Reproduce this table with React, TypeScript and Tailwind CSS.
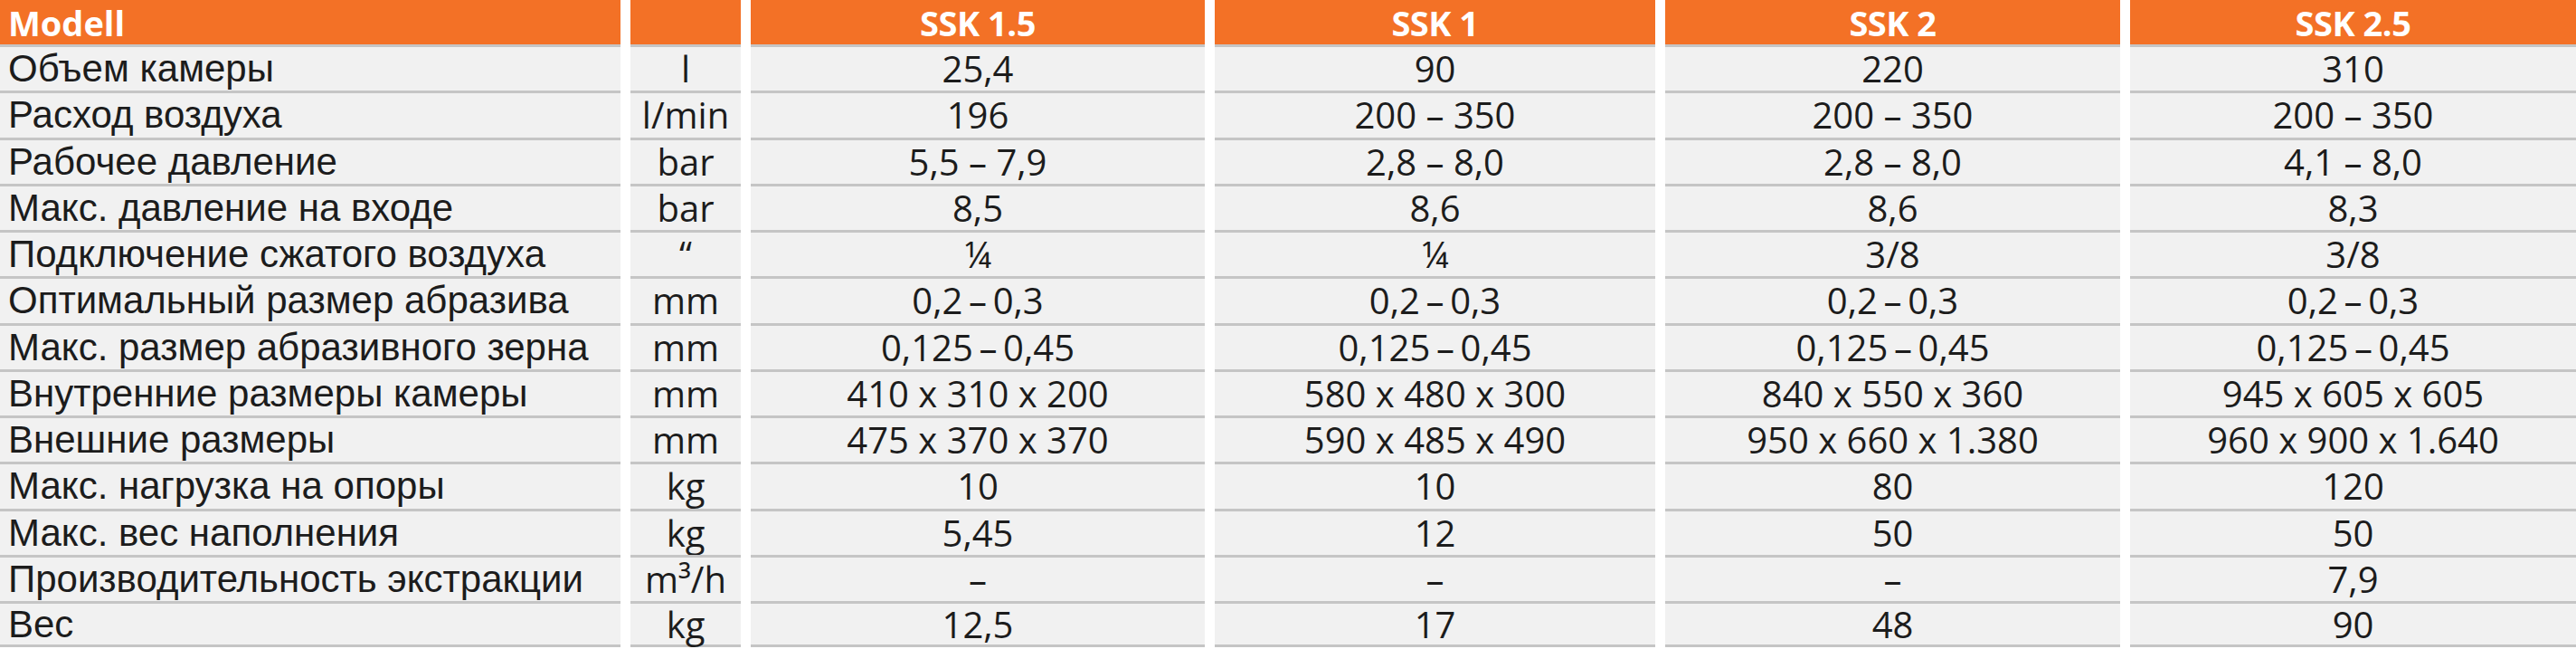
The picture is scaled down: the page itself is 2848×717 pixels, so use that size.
import React from "react"

const models = ["SSK 1.5", "SSK 1", "SSK 2", "SSK 2.5"]

const thin = "\u2009"

const rows: { label: string; unit: string; values: string[] }[] = [
  { label: "Объем камеры", unit: "l", values: ["25,4", "90", "220", "310"] },
  { label: "Расход воздуха", unit: "l/min", values: ["196", "200 – 350", "200 – 350", "200 – 350"] },
  { label: "Рабочее давление", unit: "bar", values: ["5,5 – 7,9", "2,8 – 8,0", "2,8 – 8,0", "4,1 – 8,0"] },
  { label: "Макс. давление на входе", unit: "bar", values: ["8,5", "8,6", "8,6", "8,3"] },
  { label: "Подключение сжатого воздуха", unit: "“", values: ["¼", "¼", "3/8", "3/8"] },
  {
    label: "Оптимальный размер абразива",
    unit: "mm",
    values: Array(4).fill(`0,2${thin}–${thin}0,3`),
  },
  {
    label: "Макс. размер абразивного зерна",
    unit: "mm",
    values: Array(4).fill(`0,125${thin}–${thin}0,45`),
  },
  {
    label: "Внутренние размеры камеры",
    unit: "mm",
    values: ["410 x 310 x 200", "580 x 480 x 300", "840 x 550 x 360", "945 x 605 x 605"],
  },
  {
    label: "Внешние размеры",
    unit: "mm",
    values: ["475 x 370 x 370", "590 x 485 x 490", "950 x 660 x 1.380", "960 x 900 x 1.640"],
  },
  { label: "Макс. нагрузка на опоры", unit: "kg", values: ["10", "10", "80", "120"] },
  { label: "Макс. вес наполнения", unit: "kg", values: ["5,45", "12", "50", "50"] },
  { label: "Производительность экстракции", unit: "m³/h", values: ["–", "–", "–", "7,9"] },
  { label: "Вес", unit: "kg", values: ["12,5", "17", "48", "90"] },
]

const labelFont = "font-['Liberation_Sans','Arial',sans-serif]"
const numFont = "font-['Open_Sans',sans-serif]"

export default function App() {
  return (
    <div className="w-[2848px] h-[717px] bg-white overflow-hidden">
      <div className="grid grid-cols-[686px_122px_502px_487px_503px_1fr] gap-x-[11px]">
        {/* Header */}
        <div className={`h-[49px] bg-[#f37126] flex items-center pl-[9px] text-white font-bold text-[38px] leading-none ${numFont}`}>
          Modell
        </div>
        <div className="h-[49px] bg-[#f37126]" />
        {models.map((m) => (
          <div
            key={m}
            className={`h-[49px] bg-[#f37126] flex items-center justify-center text-white font-bold text-[38px] leading-none tracking-[-0.5px] ${numFont}`}
          >
            {m}
          </div>
        ))}

        {/* Body */}
        {rows.map((row, i) => {
          const last = i === rows.length - 1
          const cell = `h-[51.25px] bg-[#f1f1f1] border-t-[3px] border-[#c5c5c5] leading-none ${last ? "border-b-[3px]" : ""}`
          return (
            <React.Fragment key={row.label}>
              <div className={`${cell} flex items-center pl-[9px] text-[42px] text-[#1c1c1c] whitespace-nowrap ${labelFont}`}>
                {row.label}
              </div>
              <div className={`${cell} flex items-center justify-center text-[40px] text-[#1c1c1c] ${numFont}`}>
                {row.unit}
              </div>
              {row.values.map((v, j) => (
                <div
                  key={j}
                  className={`${cell} flex items-center justify-center text-[40px] text-[#1c1c1c] whitespace-nowrap ${numFont}`}
                >
                  {v}
                </div>
              ))}
            </React.Fragment>
          )
        })}
      </div>
    </div>
  )
}
